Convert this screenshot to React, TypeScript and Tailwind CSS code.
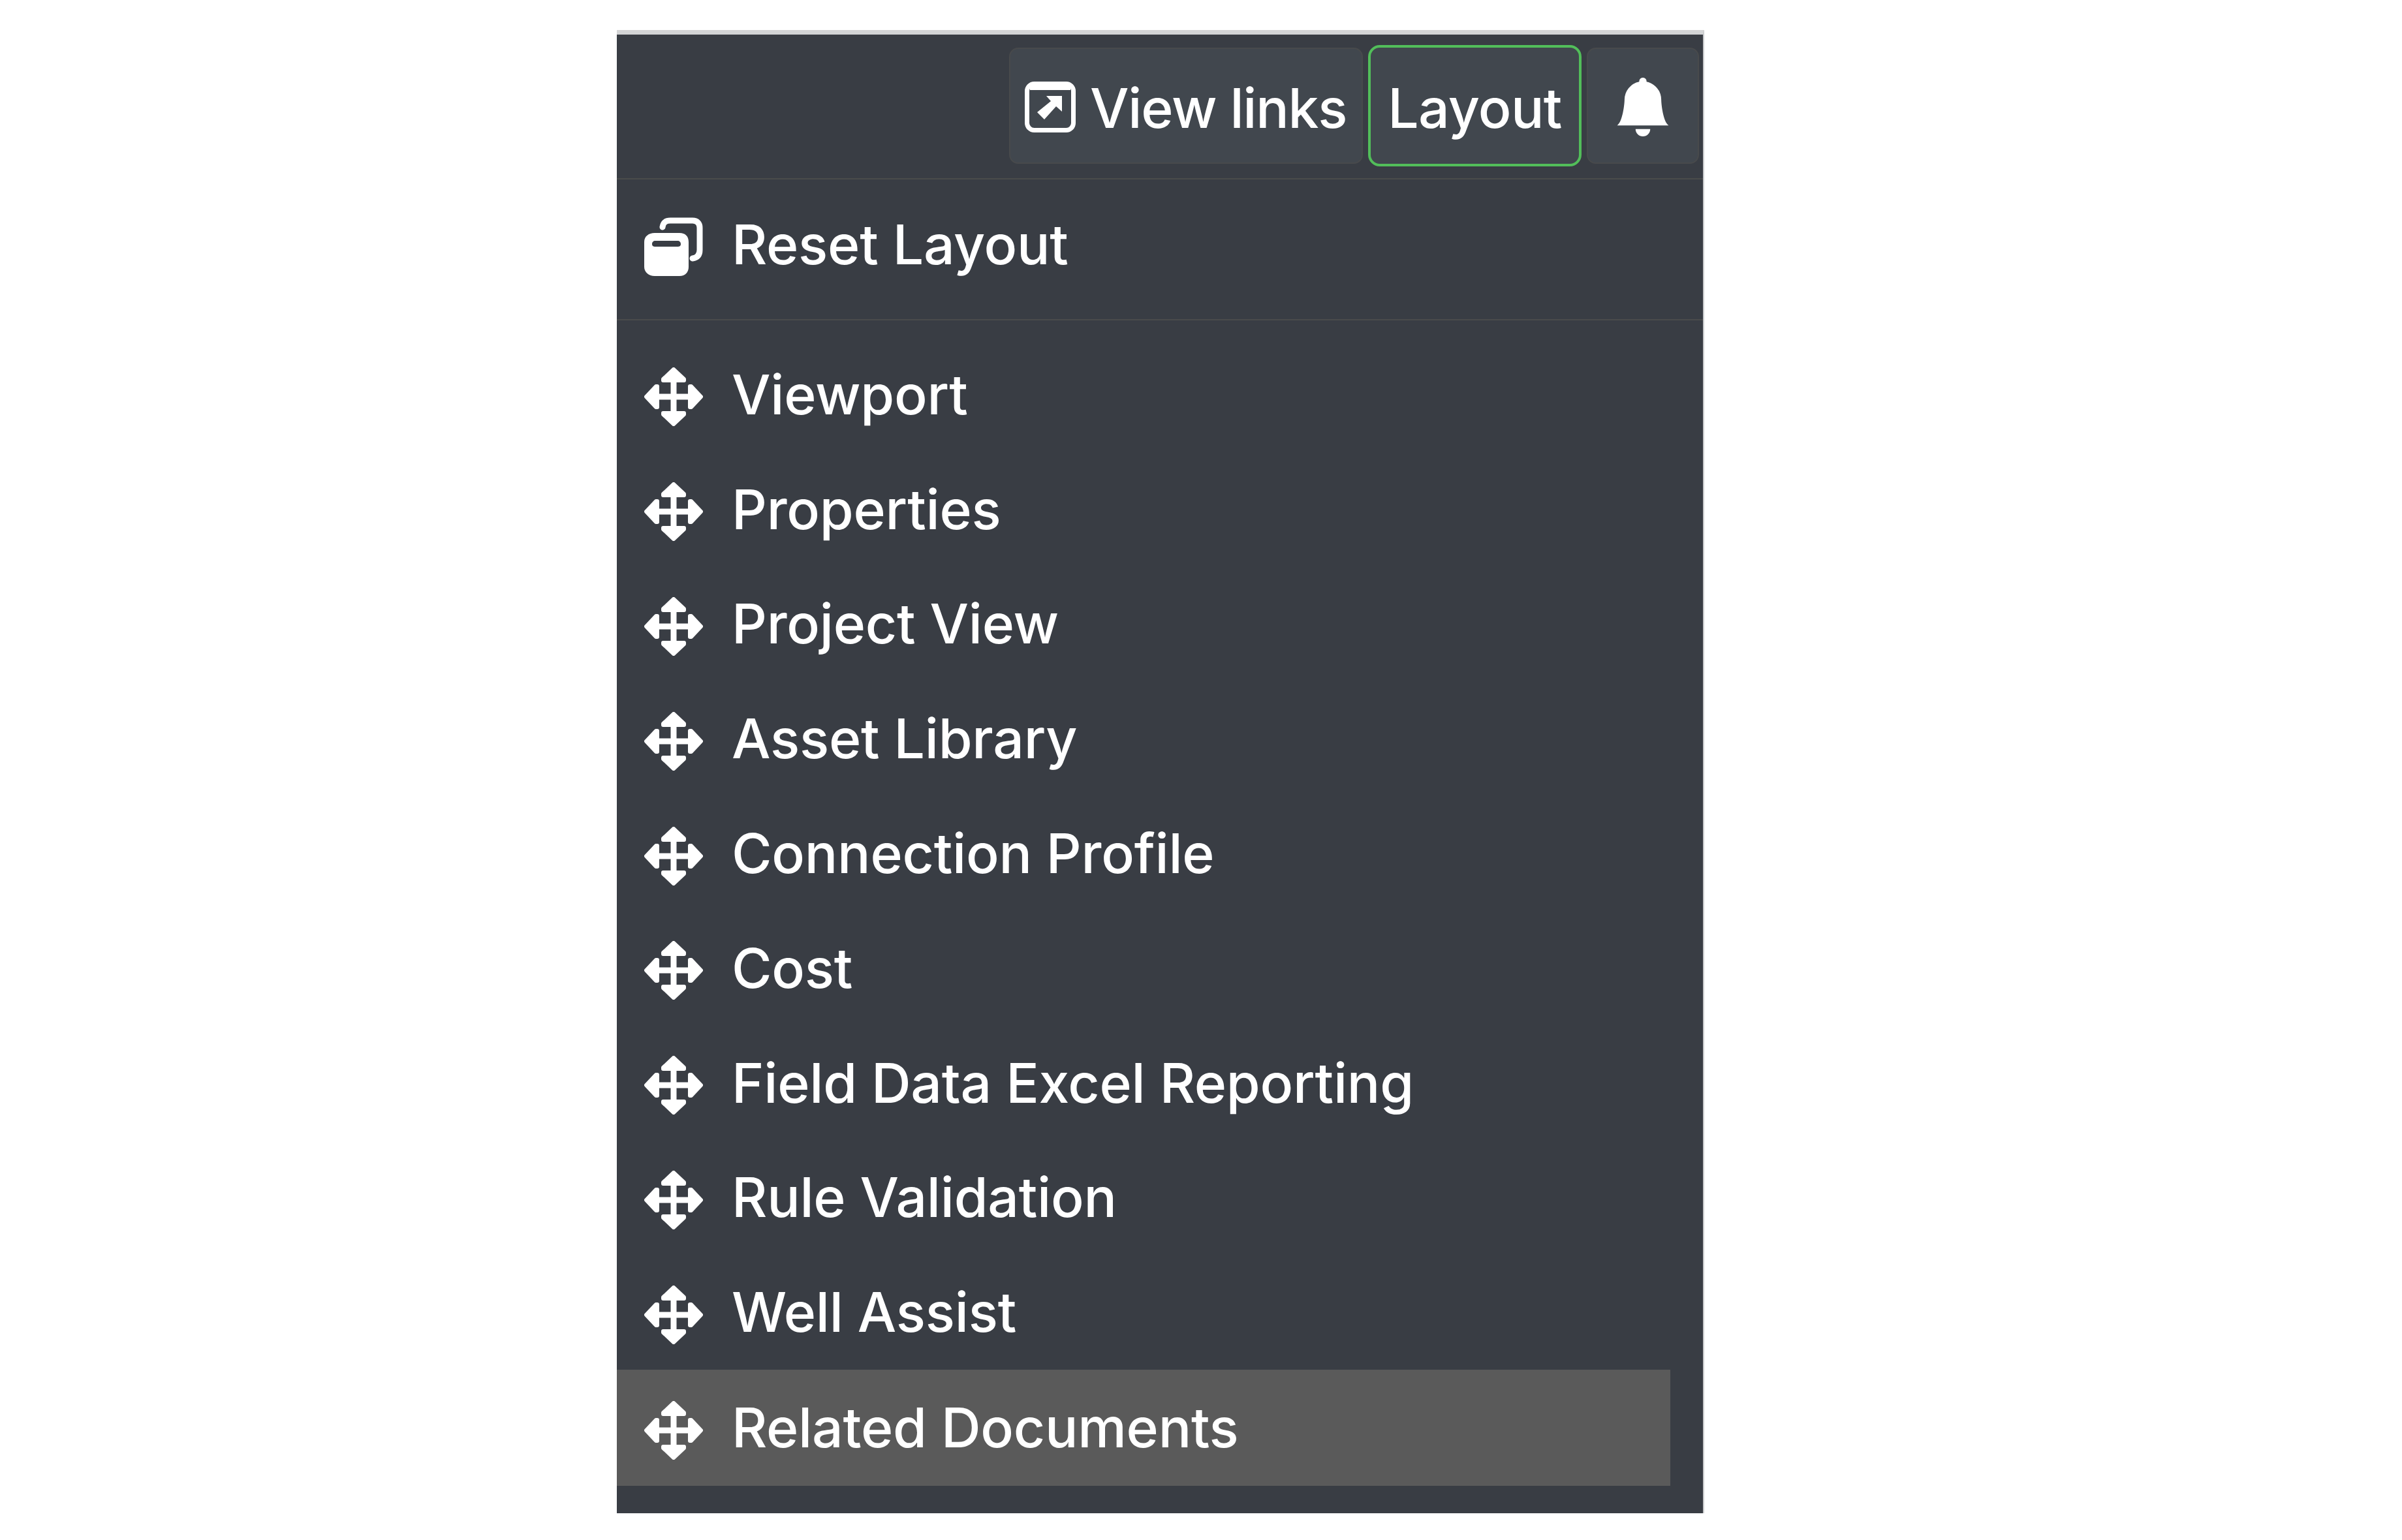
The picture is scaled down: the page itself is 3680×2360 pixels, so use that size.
import { BsBellFill } from "react-icons/bs";

const panels = [
  "Viewport",
  "Properties",
  "Project View",
  "Asset Library",
  "Connection Profile",
  "Cost",
  "Field Data Excel Reporting",
  "Rule Validation",
  "Well Assist",
  "Related Documents",
];

function ResetIcon() {
  return (
    <svg viewBox="0 0 90 90" className="h-[90px] w-[90px] shrink-0" fill="none">
      <path
        d="M28 15 C29 8 33 5 40 5 H74 C81 5 85 9 85 16 V50 C85 58 81 62 74 63"
        stroke="white"
        strokeWidth="9"
        strokeLinecap="round"
      />
      <path
        fillRule="evenodd"
        d="M16 24 H54 C63 24 68 29 68 38 V76 C68 84 63 90 54 90 H16 C7 90 0 84 0 76 V38 C0 29 7 24 16 24 Z M17 36 C14 36 12 38 12 41 C12 44 14 45 17 45 H51 C54 45 56 44 56 41 C56 38 54 36 51 36 Z"
        fill="white"
      />
    </svg>
  );
}

function LinkIcon() {
  return (
    <svg viewBox="0 0 78 78" className="mt-[4px] h-[78px] w-[78px] shrink-0" fill="none">
      <rect x="3.5" y="3.5" width="71" height="71" rx="11" stroke="white" strokeWidth="7" />
      <rect x="8" y="6" width="62" height="7" fill="white" />
      <path d="M33 22 H57 V46 L48 38 L30 58 L19 47 L40 30 Z" fill="white" />
    </svg>
  );
}

function MoveIcon() {
  return (
    <svg
      viewBox="0 0 90 90"
      className="mt-[7px] h-[90px] w-[90px] shrink-0"
      fill="white"
      stroke="white"
      strokeWidth="6"
      strokeLinejoin="round"
    >
      <path d="M45 3 L61 18 V20 H29 V18 Z" />
      <path d="M45 87 L61 72 V70 H29 V72 Z" />
      <path d="M3 45 L18 29 H20 V61 H18 Z" />
      <path d="M87 45 L72 29 H70 V61 H72 Z" />
      <path d="M45 20 V70 M20 45 H70" fill="none" strokeWidth="9" />
    </svg>
  );
}

export default function App() {
  return (
    <div className="min-h-[2360px] overflow-hidden bg-white pl-[945px] pt-[46px] font-['Inter',sans-serif] text-white">
      <div className="h-[2273px] w-[1666px] border-t-[7px] border-r-[2px] border-t-[#d4d5d6] border-r-[#c8cacc] bg-[#393d44]">
        <div className="flex h-[222px] items-start justify-end gap-[12px] border-b-[2px] border-[#4a4b4b] pr-[6px] pt-[20px]">
          <div className="flex h-[178px] w-[542px] items-center gap-[22px] rounded-[14px] border-[2px] border-[#484a4c] bg-[#41474e] pl-[22px]">
            <LinkIcon />
            <span className="pt-[8px] text-[84px] leading-none font-medium tracking-[-0.015em]">View links</span>
          </div>
          <div className="flex h-[178px] w-[319px] items-center justify-center rounded-[14px] bg-[#41474e] outline-[4px] outline-[#52be5a]">
            <span className="pt-[8px] text-[84px] leading-none font-medium tracking-[-0.008em]">Layout</span>
          </div>
          <div className="flex h-[178px] w-[172px] items-center justify-center rounded-[14px] border-[2px] border-[#484a4c] bg-[#41474e]">
            <BsBellFill className="mt-[4px] h-[90px] w-[90px]" />
          </div>
        </div>
        <div className="flex h-[216px] items-center gap-[44px] border-b-[2px] border-[#4a4b4b] pb-[8px] pl-[42px]">
          <ResetIcon />
          <span className="pb-[6px] text-[84px] leading-none font-medium tracking-[-0.003em]">Reset Layout</span>
        </div>
        <div className="pt-[26px]">
          {panels.map((name, i) => (
            <div
              key={name}
              className={
                i === panels.length - 1
                  ? "flex h-[178px] w-[1614px] items-center gap-[44px] bg-[#5a5a5a] pl-[42px]"
                  : "flex h-[175.8px] items-center gap-[44px] pl-[42px]"
              }
            >
              <MoveIcon />
              <span className="text-[84px] leading-none font-medium tracking-[-0.003em]">{name}</span>
            </div>
          ))}
        </div>
      </div>
    </div>
  );
}
